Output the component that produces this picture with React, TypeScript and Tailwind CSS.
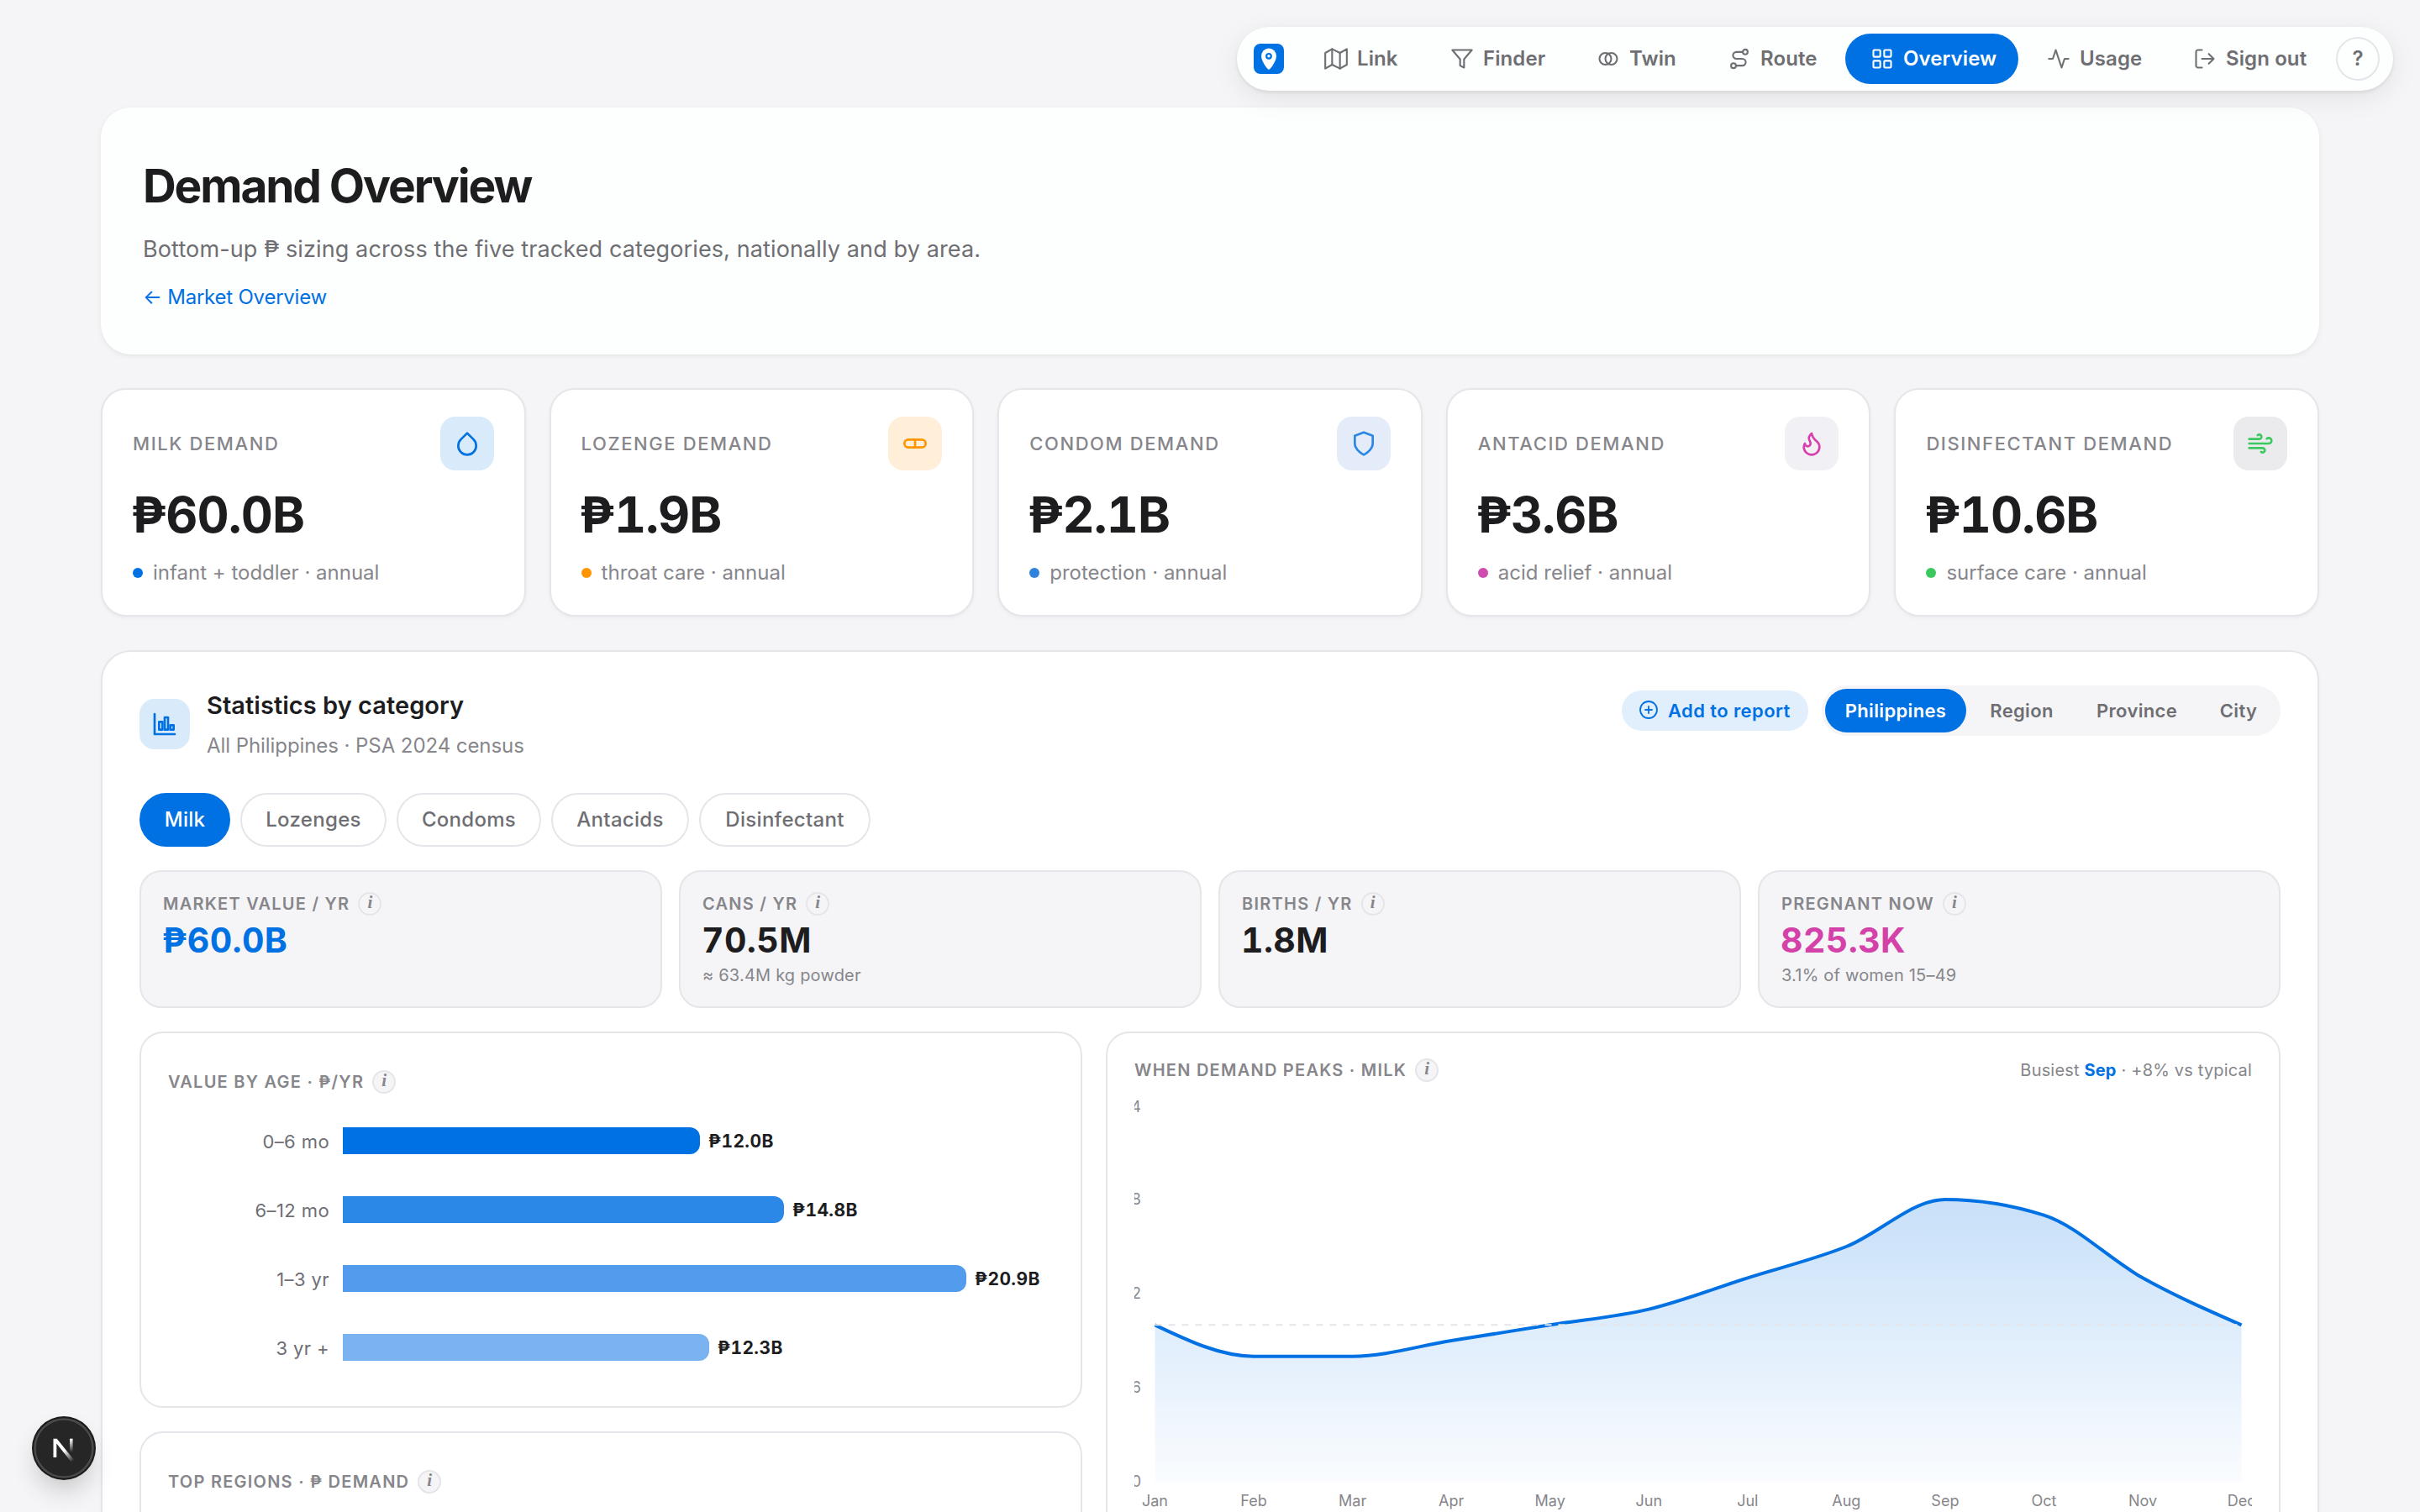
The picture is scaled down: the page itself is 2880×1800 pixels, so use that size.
import type { ReactNode } from 'react';
import { clsx } from 'clsx';
import { LayoutGrid } from 'lucide-react';

function Icon({ size = 28, width = 1.8, className, children }: { size?: number; width?: number; className?: string; children: ReactNode }) {
  return (
    <svg
      width={size}
      height={size}
      viewBox="0 0 24 24"
      fill="none"
      stroke="currentColor"
      strokeWidth={width}
      strokeLinecap="round"
      strokeLinejoin="round"
      className={clsx('shrink-0', className)}
    >
      {children}
    </svg>
  );
}

const navItems = [
  {
    label: 'Link',
    width: 'w-[146px]',
    icon: (
      <Icon>
        <path d="M1 6v16l7-4 8 4 7-4V2l-7 4-8-4-7 4z" />
        <path d="M8 2v16M16 6v16" />
      </Icon>
    ),
  },
  {
    label: 'Finder',
    width: 'w-[170px]',
    icon: (
      <Icon>
        <path d="M22 3H2l8 9.46V19l4 2v-8.54L22 3z" />
      </Icon>
    ),
  },
  {
    label: 'Twin',
    width: 'w-[152px]',
    icon: (
      <Icon>
        <circle cx="9" cy="12" r="6" />
        <circle cx="15" cy="12" r="6" />
      </Icon>
    ),
  },
  {
    label: 'Route',
    width: 'w-[166px]',
    icon: (
      <Icon>
        <circle cx="6" cy="19" r="2.5" />
        <circle cx="18" cy="5" r="2.5" />
        <path d="M8.5 19H15a3.5 3.5 0 0 0 0-7H9a3.5 3.5 0 0 1 0-7h6.5" />
      </Icon>
    ),
  },
  { label: 'Overview', width: 'w-[206px]', active: true, icon: <LayoutGrid size={28} strokeWidth={1.8} className="shrink-0" /> },
  {
    label: 'Usage',
    width: 'w-[170px]',
    icon: (
      <Icon>
        <path d="M22 12h-4l-3 9L9 3l-3 9H2" />
      </Icon>
    ),
  },
  {
    label: 'Sign out',
    width: 'w-[196px]',
    icon: (
      <Icon>
        <path d="M9 21H5a2 2 0 0 1-2-2V5a2 2 0 0 1 2-2h4M16 17l5-5-5-5M21 12H9" />
      </Icon>
    ),
  },
];

const kpis = [
  {
    label: 'Milk demand',
    value: '₱60.0B',
    sub: 'infant + toddler · annual',
    tile: 'bg-[#d9eafb] text-[#0071e3]',
    dot: 'bg-[#0071e3]',
    icon: <path d="M12 2.69l5.66 5.66a8 8 0 1 1-11.31 0z" />,
  },
  {
    label: 'Lozenge demand',
    value: '₱1.9B',
    sub: 'throat care · annual',
    tile: 'bg-[#ffefd9] text-[#ff9500]',
    dot: 'bg-[#ff9500]',
    icon: (
      <>
        <rect x="2.5" y="8.5" width="19" height="7" rx="3.5" />
        <path d="M12 8.5v7" />
      </>
    ),
  },
  {
    label: 'Condom demand',
    value: '₱2.1B',
    sub: 'protection · annual',
    tile: 'bg-[#e3ecf8] text-[#2b87e6]',
    dot: 'bg-[#2f83dc]',
    icon: <path d="M12 22s8-4 8-10V5l-8-3-8 3v7c0 6 8 10 8 10z" />,
  },
  {
    label: 'Antacid demand',
    value: '₱3.6B',
    sub: 'acid relief · annual',
    tile: 'bg-[#f1f1f5] text-[#d63fac]',
    dot: 'bg-[#cf4bad]',
    icon: (
      <path d="M8.5 14.5A2.5 2.5 0 0 0 11 12c0-1.38-.5-2-1-3-1.072-2.143-.224-4.054 2-6 .5 2.5 2 4.9 4 6.5 2 1.6 3 3.5 3 5.5a7 7 0 1 1-14 0c0-1.153.433-2.294 1-3a2.5 2.5 0 0 0 2.5 2.5z" />
    ),
  },
  {
    label: 'Disinfectant demand',
    value: '₱10.6B',
    sub: 'surface care · annual',
    tile: 'bg-[#ebebed] text-[#3bc95f]',
    dot: 'bg-[#3bc95f]',
    icon: <path d="M9.59 4.59A2 2 0 1 1 11 8H2m10.59 11.41A2 2 0 1 0 14 16H2m15.73-8.27A2.5 2.5 0 1 1 19.5 12H2" />,
  },
];

const scopes = [
  { label: 'Philippines', width: 'w-[168px]', active: true },
  { label: 'Region', width: 'w-[124px]' },
  { label: 'Province', width: 'w-[142px]' },
  { label: 'City', width: 'w-[92px]' },
];

const categories = [
  { label: 'Milk', width: 'w-[108px]', active: true },
  { label: 'Lozenges', width: 'w-[174px]' },
  { label: 'Condoms', width: 'w-[172px]' },
  { label: 'Antacids', width: 'w-[164px]' },
  { label: 'Disinfectant', width: 'w-[204px]' },
];

const stats = [
  { label: 'Market value / yr', value: '₱60.0B', color: 'text-[#0071e3]' },
  { label: 'Cans / yr', value: '70.5M', sub: '≈ 63.4M kg powder', color: 'text-[#1d1d1f]' },
  { label: 'Births / yr', value: '1.8M', color: 'text-[#1d1d1f]' },
  { label: 'Pregnant now', value: '825.3K', sub: '3.1% of women 15–49', color: 'text-[#d441a8]' },
];

const ages = [
  { label: '0–6 mo', value: '₱12.0B', width: 425, color: 'bg-[#0071e3]' },
  { label: '6–12 mo', value: '₱14.8B', width: 525, color: 'bg-[#2b88e6]' },
  { label: '1–3 yr', value: '₱20.9B', width: 742, color: 'bg-[#539bec]' },
  { label: '3 yr +', value: '₱12.3B', width: 436, color: 'bg-[#7ab3ef]' },
];

const months = ['Jan', 'Feb', 'Mar', 'Apr', 'May', 'Jun', 'Jul', 'Aug', 'Sep', 'Oct', 'Nov', 'Dec'];
const season = [1, 0.98, 0.98, 0.99, 1, 1.01, 1.03, 1.05, 1.08, 1.07, 1.03, 1];

const LEFT = 24.5;
const STEP = 117.55;
const BOTTOM = 468;

const px = (i: number) => LEFT + i * STEP;
const py = (v: number) => BOTTOM - ((v - 0.9) / 0.24) * 448;

// Monotone cubic through evenly spaced points
function monotone(values: number[]) {
  const ys = values.map(py);
  const d = ys.slice(1).map((y, i) => (y - ys[i]) / STEP);
  const m = ys.map((_, i) => {
    if (i === 0 || i === ys.length - 1) return 0;
    const a = d[i - 1];
    const b = d[i];
    return (Math.sign(a) + Math.sign(b)) * Math.min(Math.abs(a), Math.abs(b), 0.25 * Math.abs(a + b)) || 0;
  });
  m[0] = (3 * d[0] - m[1]) / 2;
  m[m.length - 1] = (3 * d[d.length - 1] - m[m.length - 2]) / 2;
  let path = `M${px(0)},${ys[0]}`;
  for (let i = 1; i < ys.length; i++) {
    const t = STEP / 3;
    path += `C${px(i - 1) + t},${ys[i - 1] + t * m[i - 1]} ${px(i) - t},${ys[i] - t * m[i]} ${px(i)},${ys[i]}`;
  }
  return path;
}

function Info() {
  return (
    <span className="flex size-7 shrink-0 items-center justify-center rounded-full border-2 border-[#e5e5ea] bg-[#f5f5f7] pb-[3px] font-['Liberation_Serif',serif] text-[21px] leading-none font-bold tracking-normal text-[#86868b] normal-case italic">
      i
    </span>
  );
}

function Label({ children }: { children: ReactNode }) {
  return (
    <div className="flex h-7 items-center gap-[10px] text-[20px] font-semibold tracking-[1.25px] text-[#86868b] uppercase">
      <span className="-mt-px whitespace-nowrap">{children}</span>
      <Info />
    </div>
  );
}

function Nav() {
  return (
    <nav className="relative z-10 flex h-[76px] items-center rounded-full bg-[#fdfefe] pr-4 pl-5 shadow-[0_2px_4px_rgba(0,0,0,0.08),0_8px_32px_rgba(0,0,0,0.08)]">
      <span className="mr-[18px] flex size-9 items-center justify-center rounded-lg bg-[#0071e3]">
        <svg width="36" height="36" viewBox="0 0 36 36">
          <path d="M18 31c-1 0-9-9.500-9-16.500a9 9 0 0 1 18 0C27 21.500 19 31 18 31z" fill="#fff" />
          <circle cx="18" cy="14.800" r="2.800" fill="#fff" stroke="#0071e3" strokeWidth="2.200" />
        </svg>
      </span>
      <div className="flex gap-1">
        {navItems.map(item => (
          <a
            key={item.label}
            className={clsx(
              'flex h-[60px] items-center gap-[11px] rounded-full pl-[30px] text-[24px] font-semibold tracking-[0.1px] whitespace-nowrap',
              item.width,
              item.active ? 'bg-[#0071e3] text-white' : 'text-[#6e6e73]',
            )}
          >
            {item.icon}
            {item.label}
          </a>
        ))}
        <button className="mt-1 flex size-[52px] items-center justify-center rounded-full border-2 border-[#e5e5ea] text-[24px] font-semibold text-[#6e6e73]">
          ?
        </button>
      </div>
    </nav>
  );
}

function Hero() {
  return (
    <section className="mt-5 h-[294px] rounded-[36px] bg-[#fdfefe] px-[50px] pt-[61px] shadow-[0_2px_6px_rgba(0,0,0,0.07)]">
      <h1 className="text-[55px] leading-[64px] font-bold tracking-[-2.1px] text-[#1d1d1f]">Demand Overview</h1>
      <p className="mt-6 text-[27px] leading-10 tracking-[0.12px] text-[#6e6e73]">
        Bottom-up ₱ sizing across the five tracked categories, nationally and by area.
      </p>
      <a className="mt-[21px] block text-[24px] leading-8 tracking-[-0.22px] text-[#0071e3]">← Market Overview</a>
    </section>
  );
}

function KpiCards() {
  return (
    <section className="mt-10 grid grid-cols-5 gap-7">
      {kpis.map(k => (
        <div key={k.label} className="h-[272px] rounded-[30px] border-2 border-[#e5e5ea] bg-white px-9 pt-8 shadow-[0_2px_4px_rgba(0,0,0,0.04)]">
          <div className="flex h-16 items-center justify-between">
            <span className="text-[22px] font-medium tracking-[1.6px] whitespace-nowrap text-[#86868b] uppercase">{k.label}</span>
            <span className={clsx('flex size-16 items-center justify-center rounded-[18px]', k.tile)}>
              <Icon size={32} width={2}>
                {k.icon}
              </Icon>
            </span>
          </div>
          <div className="mt-[21px] -ml-[2px] text-[59px] leading-[64px] font-bold tracking-[-0.9px] text-[#1d1d1f] tabular-nums">{k.value}</div>
          <div className="mt-[21px] flex items-center gap-3 text-[24px] leading-8 text-[#86868b]">
            <span className={clsx('size-3 rounded-full', k.dot)} />
            {k.sub}
          </div>
        </div>
      ))}
    </section>
  );
}

function StatsHeader() {
  return (
    <div className="flex h-[92px] justify-between">
      <div className="flex items-center gap-5">
        <span className="flex size-[60px] items-center justify-center rounded-[18px] bg-[#d9eafb] text-[#0071e3]">
          <Icon size={32} width={2}>
            <path d="M3 3v18h18" />
            <rect x="7" y="10" width="3" height="7" />
            <rect x="12" y="6" width="3" height="11" />
            <rect x="17" y="13" width="3" height="4" />
          </Icon>
        </span>
        <div className="pt-[2px]">
          <h2 className="text-[29px] leading-9 font-semibold tracking-[0.04px] text-[#1d1d1f]">Statistics by category</h2>
          <p className="mt-[14px] text-[24px] leading-8 tracking-[-0.07px] text-[#86868b]">All Philippines · PSA 2024 census</p>
        </div>
      </div>
      <div className="flex h-[60px] items-center gap-4">
        <button className="flex h-12 w-[222px] items-center gap-[11px] rounded-full bg-[#e1eefc] pl-5 text-[22px] font-semibold tracking-[0.4px] whitespace-nowrap text-[#0071e3]">
          <Icon size={24} className="-mt-[2px]">
            <circle cx="12" cy="12" r="10" />
            <path d="M12 8v8M8 12h8" />
          </Icon>
          Add to report
        </button>
        <div className="flex h-[60px] gap-1 rounded-full bg-[#f5f5f7] p-1 text-[22px] font-semibold tracking-[0.34px]">
          {scopes.map(s => (
            <button
              key={s.label}
              className={clsx(
                'flex h-[52px] items-center justify-center rounded-full',
                s.width,
                s.active ? 'bg-[#0071e3] text-white' : 'text-[#6e6e73]',
              )}
            >
              {s.label}
            </button>
          ))}
        </div>
      </div>
    </div>
  );
}

function ValueByAge() {
  return (
    <div className="h-[448px] rounded-[28px] border-2 border-[#e5e5ea] px-8 pt-11">
      <Label>Value by age · ₱/yr</Label>
      <div className="mt-[15px]">
        {ages.map(a => (
          <div key={a.label} className="flex h-[82px] items-center">
            <span className="mt-[2px] w-48 text-right text-[22px] tracking-[0.4px] text-[#6e6e73]">{a.label}</span>
            <span className={clsx('ml-4 h-8 rounded-r-[12px]', a.color)} style={{ width: a.width }} />
            <span className="mt-px ml-[10px] text-[21px] font-bold tracking-[0.4px] text-[#1d1d1f] tabular-nums">{a.value}</span>
          </div>
        ))}
      </div>
    </div>
  );
}

function SeasonChart() {
  const line = monotone(season);
  const end = px(season.length - 1);
  return (
    <svg width="1330" height="520" className="mt-2 block overflow-hidden font-['Inter',sans-serif]">
      <defs>
        <linearGradient id="seasonFill" x1="0" y1="0" x2="0" y2="1">
          <stop offset="0" stopColor="#0071e3" stopOpacity="0.22" />
          <stop offset="1" stopColor="#0071e3" stopOpacity="0.02" />
        </linearGradient>
      </defs>
      {['4', '8', '2', '6', '0'].map((t, i) => (
        <text key={t} x="8" y={(i === 0 ? 28 : 26) + i * 112} textAnchor="end" fontSize="18" fill="#86868b">
          {t}
        </text>
      ))}
      <path d={`${line}L${end},${BOTTOM}L${LEFT},${BOTTOM}Z`} fill="url(#seasonFill)" />
      <path d={line} fill="none" stroke="#0071e3" strokeWidth="4" />
      <path d={`M${LEFT},${py(1)}H${end}`} stroke="#e5e5ea" strokeWidth="2" strokeDasharray="8 8" />
      {months.map((m, i) => (
        <text key={m} x={px(i)} y="497" textAnchor="middle" fontSize="18" fill="#86868b">
          {m}
        </text>
      ))}
    </svg>
  );
}

function DevBadge() {
  return (
    <div className="absolute top-[1686px] left-[38px] z-10 size-[76px] rounded-full shadow-[0_16px_32px_-8px_rgba(0,0,0,0.24)]">
      <svg width="76" height="76" viewBox="0 0 76 76" fill="none">
        <circle cx="38" cy="38" r="38" fill="#1b1b1b" />
        <circle cx="38" cy="38" r="34.5" fill="#262626" stroke="#4a4a4a" strokeWidth="2.5" />
        <path d="M25.500 26.700h4.200L50 52l-3.200 2.400L29.300 32.500V49h-3.800z" fill="url(#nFade)" />
        <path d="M46.800 26.700v17" stroke="url(#nStem)" strokeWidth="3.600" />
        <defs>
          <linearGradient id="nFade" gradientUnits="userSpaceOnUse" x1="38" y1="41" x2="48.5" y2="54">
            <stop stopColor="#fff" />
            <stop offset="1" stopColor="#fff" stopOpacity="0" />
          </linearGradient>
          <linearGradient id="nStem" gradientUnits="userSpaceOnUse" x1="46" y1="27" x2="46" y2="43">
            <stop stopColor="#fff" />
            <stop offset="1" stopColor="#fff" stopOpacity="0" />
          </linearGradient>
        </defs>
      </svg>
    </div>
  );
}

export default function App() {
  return (
    <div className="relative h-[1800px] w-full overflow-hidden bg-[#f5f5f7] font-['Inter',sans-serif] antialiased">
      <header className="flex justify-end pt-8 pr-8">
        <Nav />
      </header>

      <main className="px-[120px]">
        <Hero />
        <KpiCards />

        <section className="mt-10 rounded-[36px] border-2 border-[#e5e5ea] bg-white px-11 pt-10 shadow-[0_2px_4px_rgba(0,0,0,0.04)]">
          <StatsHeader />

          <div className="mt-9 flex gap-3">
            {categories.map(c => (
              <button
                key={c.label}
                className={clsx(
                  'flex h-16 items-center justify-center rounded-full border-2 text-[24px] font-medium tracking-[0.3px]',
                  c.width,
                  c.active ? 'border-[#0071e3] bg-[#0071e3] text-white' : 'border-[#e5e5ea] text-[#6e6e73]',
                )}
              >
                {c.label}
              </button>
            ))}
          </div>

          <div className="mt-7 grid grid-cols-4 gap-5">
            {stats.map(s => (
              <div key={s.label} className="h-[164px] rounded-[26px] border-2 border-[#e5e5ea] bg-[#f5f5f7] px-[26px] pt-6">
                <Label>{s.label}</Label>
                <div className={clsx('mt-[7px] -ml-px text-[41px] leading-[44px] font-bold tracking-[0.4px] tabular-nums', s.color)}>{s.value}</div>
                {s.sub && <div className="mt-[7px] text-[20px] leading-[26px] tracking-[0.2px] text-[#86868b]">{s.sub}</div>}
              </div>
            ))}
          </div>

          <div className="mt-7 grid grid-cols-[1122fr_1398fr] gap-7">
            <div className="flex flex-col gap-7">
              <ValueByAge />
              <div className="h-[448px] rounded-[28px] border-2 border-[#e5e5ea] px-8 pt-11">
                <Label>Top regions · ₱ demand</Label>
              </div>
            </div>
            <div className="rounded-[28px] border-2 border-[#e5e5ea] px-8 pt-[30px]">
              <div className="flex justify-between">
                <Label>When demand peaks · Milk</Label>
                <span className="text-[20px] leading-7 tracking-[0.18px] text-[#86868b]">
                  Busiest <b className="font-bold text-[#0071e3]">Sep</b> · +8% vs typical
                </span>
              </div>
              <SeasonChart />
            </div>
          </div>
        </section>
      </main>

      <DevBadge />
    </div>
  );
}
